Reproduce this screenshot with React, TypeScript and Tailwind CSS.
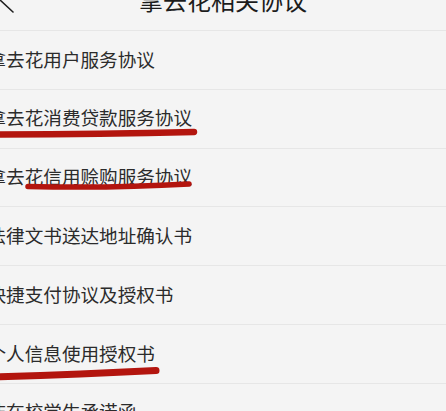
import React from 'react'

const ITEMS = [
  '拿去花用户服务协议',
  '拿去花消费贷款服务协议',
  '拿去花信用赊购服务协议',
  '法律文书送达地址确认书',
  '快捷支付协议及授权书',
  '个人信息使用授权书',
  '非在校学生承诺函',
]

const FONT = { fontFamily: '"Noto Sans CJK SC", "Noto Sans", sans-serif' }

export default function App() {
  return (
    <div className="relative h-[411px] w-[446px] overflow-hidden bg-[#f4f4f4]" style={FONT}>
      {/* Header (cropped at the top) */}
      <div className="relative flex h-[31px] flex-col overflow-hidden border-b border-[#e6e6e6]">
        <div className="-mt-[15px] flex h-[30px] shrink-0 items-center justify-center">
          <span className="text-[24px] leading-none text-[#1c1c1c]">拿去花相关协议</span>
        </div>
        <svg className="absolute -top-[14px] -left-[2px]" width="20" height="30" viewBox="0 0 20 30">
          <path d="M15 2 L2 14 L15 26" fill="none" stroke="#1f1f1f" strokeWidth="1.6" strokeLinecap="round" />
        </svg>
      </div>

      {/* Agreement list */}
      <ul className="-ml-[12.5px]">
        {ITEMS.map((item) => (
          <li
            key={item}
            className="flex h-[58.8px] items-center border-b border-[#e6e6e6] pb-[2px] text-[18.6px] leading-none text-[#2b2b2b]"
          >
            {item}
          </li>
        ))}
      </ul>

      {/* Hand-drawn red marks */}
      <svg className="pointer-events-none absolute inset-0" width="446" height="411" viewBox="0 0 446 411">
        <path d="M-4 134.5 Q100 134.5 194 132" fill="none" stroke="#b3150e" strokeWidth="6.5" strokeLinecap="round" />
        <path d="M28 186.5 Q110 188.5 189 184" fill="none" stroke="#b3150e" strokeWidth="5.5" strokeLinecap="round" />
        <path d="M-5 377 Q80 374.5 156 370.5" fill="none" stroke="#b3150e" strokeWidth="7" strokeLinecap="round" />
      </svg>
    </div>
  )
}
